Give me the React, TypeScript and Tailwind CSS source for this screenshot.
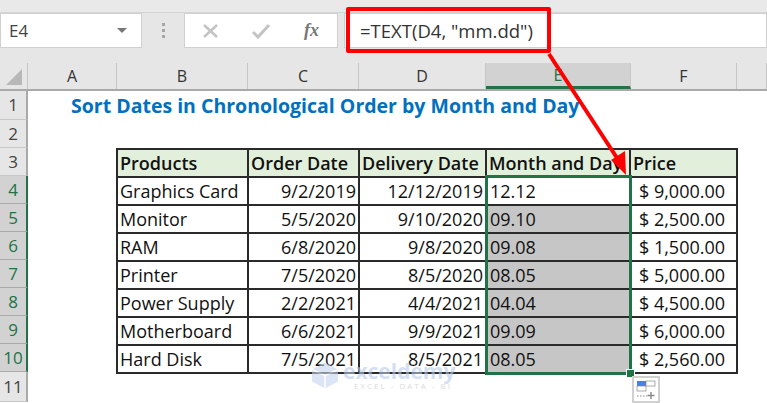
const columns = [
  { label: "A", width: "w-[89px]" },
  { label: "B", width: "w-[131px]" },
  { label: "C", width: "w-[111px]" },
  { label: "D", width: "w-[127px]" },
  { label: "E", width: "w-[145px]" },
  { label: "F", width: "w-[106px]" },
  { label: "", width: "flex-1" },
];

const rows = [
  ["Graphics Card", "9/2/2019", "12/12/2019", "12.12", "$ 9,000.00"],
  ["Monitor", "5/5/2020", "9/10/2020", "09.10", "$ 2,500.00"],
  ["RAM", "6/8/2020", "9/8/2020", "09.08", "$ 1,500.00"],
  ["Printer", "7/5/2020", "8/5/2020", "08.05", "$ 5,000.00"],
  ["Power Supply", "2/2/2021", "4/4/2021", "04.04", "$ 4,500.00"],
  ["Motherboard", "6/6/2021", "9/9/2021", "09.09", "$ 6,000.00"],
  ["Hard Disk", "7/5/2021", "8/5/2021", "08.05", "$ 2,560.00"],
];

const headers = ["Products", "Order Date", "Delivery Date", "Month and Day", "Price"];

function RowHead({ n, active }: { n: number; active?: boolean }) {
  return (
    <div
      className={
        "flex w-[28px] shrink-0 items-center justify-center border-b border-r-2 text-[17px] " +
        (active
          ? "border-b-[#a9a9a9] border-r-[#217346] bg-[#d2d2d2] text-[#217346]"
          : "border-b-[#c6c6c6] border-r-[#a9a9a9] bg-[#e6e6e6] text-[#444]")
      }
    >
      {n}
    </div>
  );
}

export default function App() {
  return (
    <div className="relative h-[403px] w-[767px] overflow-hidden bg-white font-['Open_Sans','Noto_Sans',sans-serif] text-[#111]">
      {/* ribbon edge + formula bar */}
      <div className="h-[13px] border-b border-[#d4d4d4] bg-[#e9e9e9]" />
      <div className="flex h-[50px] items-start bg-[#e6e6e6]">
        <div className="flex h-[35px] w-[142px] items-center justify-between border border-[#d0d0d0] bg-white pl-[8px] pr-[14px] text-[17px] text-[#444]">
          E4
          <span className="h-0 w-0 border-x-[5px] border-t-[5px] border-x-transparent border-t-[#777]" />
        </div>
        <div className="flex h-[35px] w-[42px] flex-col items-center justify-center gap-[3px]">
          <span className="h-[3px] w-[3px] bg-[#a5a5a5]" />
          <span className="h-[3px] w-[3px] bg-[#a5a5a5]" />
          <span className="h-[3px] w-[3px] bg-[#a5a5a5]" />
        </div>
        <div className="flex h-[35px] w-[154px] items-center border border-[#d0d0d0] bg-white">
          <svg width="18" height="16" viewBox="0 0 18 16" className="ml-[17px]">
            <path d="M2 2 L15 14 M15 2 L2 14" stroke="#c4c4c4" strokeWidth="2.6" />
          </svg>
          <svg width="18" height="16" viewBox="0 0 18 16" className="ml-[32px]">
            <path d="M1 9 L6 14 L17 2" stroke="#c4c4c4" strokeWidth="3" fill="none" />
          </svg>
          <span className="ml-[34px] font-['Liberation_Serif',serif] text-[18px] font-bold italic text-[#777]">
            fx
          </span>
        </div>
        <div className="ml-[6px] flex h-[35px] flex-1 items-center border border-[#d0d0d0] bg-white pl-[15px] text-[18.5px] text-[#333]">
          =TEXT(D4, "mm.dd")
        </div>
      </div>

      {/* column headers */}
      <div className="flex h-[28px] border-b-2 border-[#a9a9a9] bg-[#e6e6e6] text-[16px] text-[#333]">
        <div className="relative w-[28px] shrink-0 border-r border-[#c6c6c6]">
          <span className="absolute bottom-[4px] right-[5px] h-0 w-0 border-b-[16px] border-l-[16px] border-b-[#b8b8b8] border-l-transparent" />
        </div>
        {columns.map((c) => (
          <div
            key={c.label || "G"}
            className={
              "flex items-center justify-center border-r border-[#c6c6c6] " +
              c.width +
              (c.label === "E" ? " border-b-[3px] border-b-[#217346] bg-[#d2d2d2] text-[#217346]" : "")
            }
          >
            {c.label}
          </div>
        ))}
      </div>

      {/* row 1 */}
      <div className="flex h-[29px]">
        <RowHead n={1} />
        <div className="flex items-center whitespace-nowrap pl-[43px] text-[19.5px] font-bold text-[#0070c0]">
          Sort Dates in Chronological Order by Month and Day
        </div>
      </div>
      <div className="flex h-[28px]">
        <RowHead n={2} />
      </div>

      {/* row 3: table head */}
      <div className="flex h-[28px]">
        <RowHead n={3} />
        <div className="ml-[88px] grid grid-cols-[131px_111px_127px_144px_105px] border-x-2 border-t-2 border-[#2a2a2a] bg-[#e2efda] text-[18px] font-semibold">
          {headers.map((h, i) => (
            <div
              key={h}
              className={"flex items-center whitespace-nowrap pl-[2px] " + (i < 4 ? "border-r-2 border-[#2a2a2a]" : "")}
            >
              {h}
            </div>
          ))}
        </div>
      </div>

      {/* rows 4-10 */}
      {rows.map((r, i) => (
        <div key={r[0]} className="flex h-[28px]">
          <RowHead n={i + 4} active />
          <div className="ml-[88px] grid grid-cols-[131px_111px_127px_144px_105px] border-x-2 border-t-2 border-[#2a2a2a] text-[18px]">
            <div className="flex items-center border-r-2 border-[#2a2a2a] pl-[2px]">{r[0]}</div>
            <div className="flex items-center justify-end border-r-2 border-[#2a2a2a] pr-[2px]">{r[1]}</div>
            <div className="flex items-center justify-end border-r-2 border-[#2a2a2a] pr-[2px]">{r[2]}</div>
            <div
              className={
                "flex items-center border-r-2 border-[#2a2a2a] pl-[3px] " + (i > 0 ? "bg-[#c6c6c6]" : "")
              }
            >
              {r[3]}
            </div>
            <div className="flex items-center justify-center pr-[3px]">{r[4]}</div>
          </div>
        </div>
      ))}

      {/* row 11 */}
      <div className="flex h-[30px]">
        <RowHead n={11} />
        <div className="ml-[88px] h-0 w-[622px] border-t-2 border-[#2a2a2a]" />
      </div>

      {/* watermark */}
      <div className="pointer-events-none absolute left-[311px] top-[361px] flex items-start gap-[4px] opacity-60">
        <svg width="28" height="29" viewBox="0 0 28 28">
          <path d="M14 1 L27 8 V20 L14 27 L1 20 V8 Z" fill="#c5d5ef" />
          <path d="M14 14 L27 8 M14 14 L1 8 M14 14 V27" stroke="#fff" strokeWidth="1.5" />
        </svg>
        <div className="flex flex-col leading-none text-[#b8cbea]">
          <span className="text-[21px] font-bold leading-[20px]">exceldemy</span>
          <span className="pl-[11px] pt-[1px] text-[8px] tracking-[2px] text-[#c4c4c4]">EXCEL - DATA - BI</span>
        </div>
      </div>

      {/* selection */}
      <div className="pointer-events-none absolute left-[485px] top-[175px] h-[200px] w-[147px] border-[3px] border-[#217346]" />
      <div className="absolute left-[626px] top-[369px] h-[9px] w-[9px] border border-white bg-[#217346]" />

      {/* quick analysis button */}
      <div className="absolute left-[632px] top-[376px] flex h-[27px] w-[28px] items-center justify-center border-2 border-[#d0d0d0] bg-white">
        <svg width="20" height="20" viewBox="0 0 20 20">
          <rect x="1" y="1" width="9" height="5" fill="#4a7ee8" />
          <rect x="1" y="6" width="9" height="5" fill="#fff" stroke="#888" strokeWidth="0.7" />
          <rect x="10" y="1" width="9" height="5" fill="#fff" stroke="#888" strokeWidth="0.7" />
          <path d="M1 16 H11" stroke="#888" strokeDasharray="1.5 1.5" />
          <path d="M15 12 V19 M11.5 15.5 H18.5" stroke="#888" strokeWidth="1.4" />
        </svg>
      </div>

      {/* red callout */}
      <div className="pointer-events-none absolute left-[346px] top-[7px] h-[46px] w-[205px] rounded-[2px] border-[4px] border-[#fe0000]" />
      <svg className="pointer-events-none absolute left-0 top-0" width="767" height="403">
        <path d="M549 54 L619 161" stroke="#fe0000" strokeWidth="4" />
        <path d="M626 175 L611 160 L625 151 Z" fill="#fe0000" />
      </svg>
    </div>
  );
}
